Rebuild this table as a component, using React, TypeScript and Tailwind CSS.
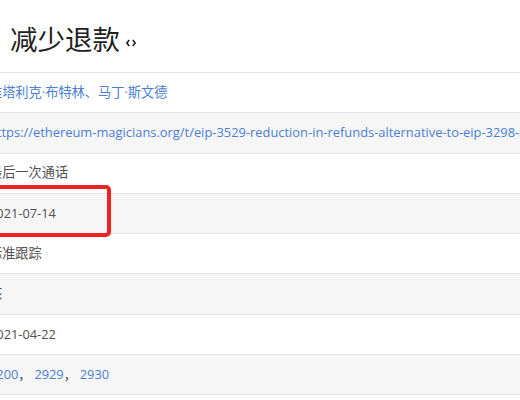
import React from 'react'

const rowBase = 'relative flex h-[40.25px] items-center border-t border-[#e4e4e4] -ml-[20px] pl-[9px] whitespace-nowrap'

const link = 'text-[#4a7fd4]'

export default function App() {
  const rows: { bg: string; content: React.ReactNode }[] = [
    {
      bg: 'bg-white',
      content: (
        <span className={`${link} text-[13.2px]`}>维塔利克·布特林、马丁·斯文德</span>
      ),
    },
    {
      bg: 'bg-[#f6f6f6]',
      content: (
        <span className={`${link} text-[12.9px]`}>
          https://ethereum-magicians.org/t/eip-3529-reduction-in-refunds-alternative-to-eip-3298-sstore-refunds/6150
        </span>
      ),
    },
    { bg: 'bg-white', content: <span className="text-[13.2px]">最后一次通话</span> },
    { bg: 'bg-[#f6f6f6]', content: <span>2021-07-14</span> },
    { bg: 'bg-white', content: <span className="text-[13.2px]">标准跟踪</span> },
    { bg: 'bg-[#f6f6f6]', content: <span className="text-[13.2px]">核</span> },
    { bg: 'bg-white', content: <span>2021-04-22</span> },
    {
      bg: 'bg-[#f6f6f6]',
      content: (
        <span>
          <span className={link}>2200</span>，<span className={link}> 2929</span>，
          <span className={link}> 2930</span>
        </span>
      ),
    },
  ]

  return (
    <div
      className="relative h-[400px] w-[520px] overflow-hidden bg-white text-[#505050]"
      style={{ fontFamily: '"Open Sans", "Noto Sans CJK SC", sans-serif' }}
    >
      <div className="flex h-[72px] items-center pl-[10px] pt-[8px]">
        <h1 className="text-[27.5px] leading-none text-[#222]">减少退款</h1>
        <svg className="ml-[6px] mt-[6px]" width="10" height="8" viewBox="0 0 10 8">
          <path d="M3.2 1 L0.9 4 L3.2 7 M6.8 1 L9.1 4 L6.8 7" stroke="#222" strokeWidth="1.6" fill="none" />
        </svg>
      </div>

      <div className="text-[12.8px]">
        {rows.map((r, i) => (
          <div key={i} className={`${rowBase} ${r.bg}`}>
            {r.content}
          </div>
        ))}
        <div className="h-[10px] border-t border-[#e4e4e4] bg-white" />
      </div>

      {/* highlight on the date */}
      <div className="absolute left-[-20px] top-[185px] h-[52px] w-[131px] rounded-[5px] border-[4px] border-[#f02222]" />
    </div>
  )
}
